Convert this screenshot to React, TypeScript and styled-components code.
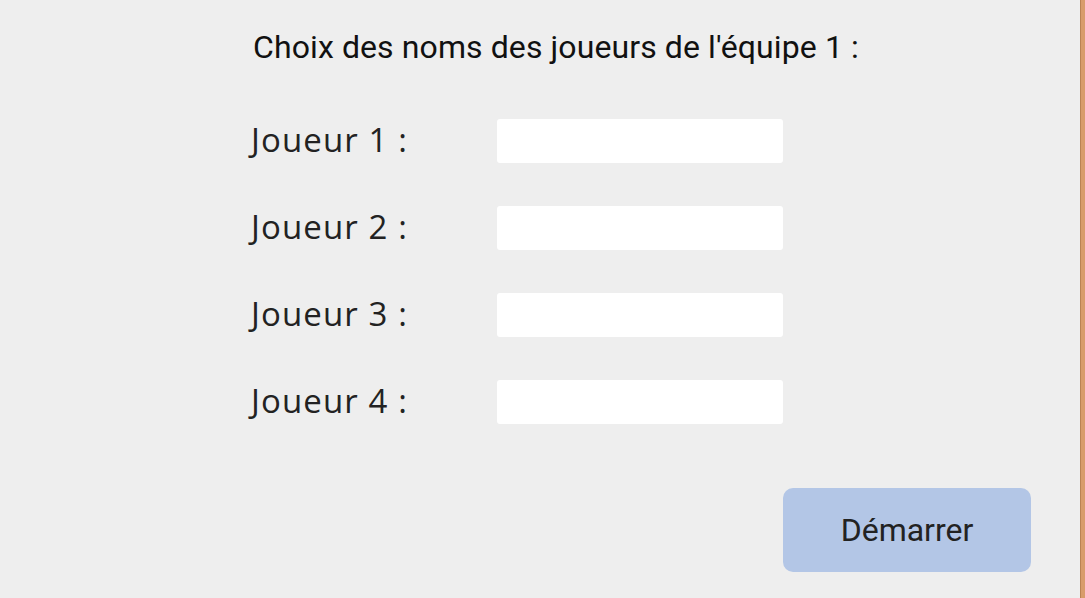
import React from "react";
import styled, { createGlobalStyle } from "styled-components";

const GlobalStyle = createGlobalStyle`
  html, body {
    margin: 0;
    padding: 0;
    background: #eeeeee;
  }
  * {
    box-sizing: border-box;
  }
`;

const players = [1, 2, 3, 4];

function App() {
  return (
    <>
      <GlobalStyle />
      <Screen>
        <Panel>
          <Form>
            <Title>Choix des noms des joueurs de l'équipe 1 :</Title>
            <Rows>
              {players.map((n) => (
                <Row key={n}>
                  <Label>Joueur {n} :</Label>
                  <NameInput type="text" />
                </Row>
              ))}
            </Rows>
            <Actions>
              <StartButton>Démarrer</StartButton>
            </Actions>
          </Form>
        </Panel>
        <SideStrip />
      </Screen>
    </>
  );
}

export default App;

const Screen = styled.div`
  width: 1085px;
  height: 598px;
  display: flex;
  overflow: hidden;
`;

const Panel = styled.div`
  flex: 1;
  background: #eeeeee;
  padding: 27px 0 0 251px;
`;

const Form = styled.div`
  width: 780px;
  display: flex;
  flex-direction: column;
`;

const Title = styled.div`
  font-family: Roboto, "Liberation Sans", sans-serif;
  font-size: 32px;
  line-height: 40px;
  letter-spacing: 0.1px;
  color: #111111;
  padding-left: 2px;
`;

const Rows = styled.div`
  margin-top: 52px;
  display: flex;
  flex-direction: column;
  gap: 43px;
`;

const Row = styled.div`
  display: flex;
  align-items: center;
  height: 44px;
`;

const Label = styled.span`
  width: 246px;
  font-family: "Open Sans", "Noto Sans", sans-serif;
  font-size: 33px;
  letter-spacing: 1.1px;
  color: #222222;
  margin-top: -3px;
`;

const NameInput = styled.input`
  width: 286px;
  height: 44px;
  border: none;
  border-radius: 3px;
  background: #ffffff;
  outline: none;
  padding: 0 8px;
  font-family: Roboto, sans-serif;
  font-size: 20px;
`;

const Actions = styled.div`
  margin-top: 64px;
  display: flex;
  justify-content: flex-end;
`;

const StartButton = styled.button`
  width: 248px;
  height: 84px;
  border: none;
  border-radius: 10px;
  background: #b3c6e6;
  color: #222222;
  font-family: Roboto, "Liberation Sans", sans-serif;
  font-size: 32px;
  cursor: pointer;
`;

const SideStrip = styled.div`
  width: 5px;
  background: #d89c6b;
  border-left: 1px solid #b98253;
`;
